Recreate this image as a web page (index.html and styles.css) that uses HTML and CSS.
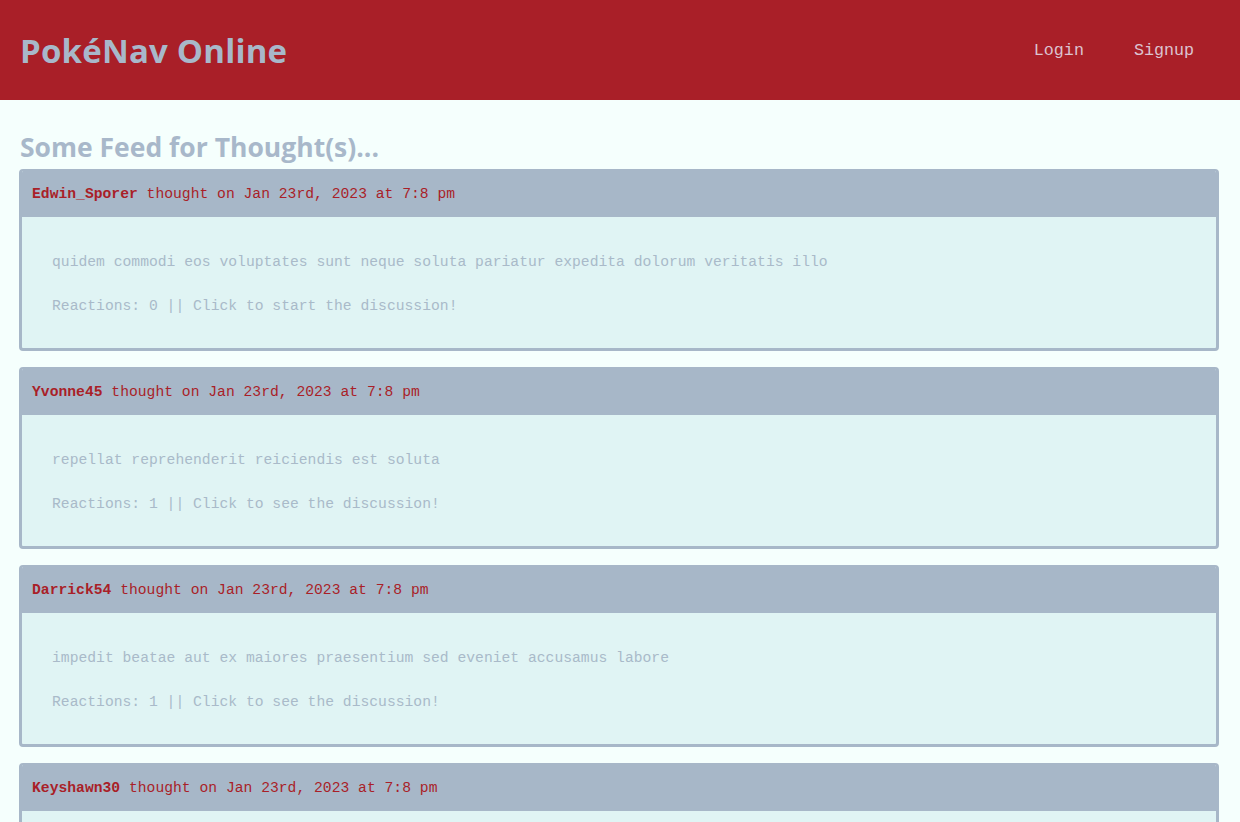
FILE: index.html
```html
<!DOCTYPE html>
<html lang="en">
<head>
<meta charset="utf-8">
<title>PokéNav Online</title>
<link rel="stylesheet" href="styles.css">
</head>
<body>
<header class="site-header">
  <h1 class="brand">PokéNav Online</h1>
  <nav class="nav">
    <a href="#" class="nav-link">Login</a>
    <a href="#" class="nav-link">Signup</a>
  </nav>
</header>
<main class="main">
  <h2 class="feed-title">Some Feed for Thought(s)...</h2>
  <div class="feed">
    <article class="card">
      <div class="card-header"><span class="user">Edwin_Sporer</span> thought on Jan 23rd, 2023 at 7:8 pm</div>
      <div class="card-body">
        <p>quidem commodi eos voluptates sunt neque soluta pariatur expedita dolorum veritatis illo</p>
        <p>Reactions: 0 || Click to start the discussion!</p>
      </div>
    </article>
    <article class="card">
      <div class="card-header"><span class="user">Yvonne45</span> thought on Jan 23rd, 2023 at 7:8 pm</div>
      <div class="card-body">
        <p>repellat reprehenderit reiciendis est soluta</p>
        <p>Reactions: 1 || Click to see the discussion!</p>
      </div>
    </article>
    <article class="card">
      <div class="card-header"><span class="user">Darrick54</span> thought on Jan 23rd, 2023 at 7:8 pm</div>
      <div class="card-body">
        <p>impedit beatae aut ex maiores praesentium sed eveniet accusamus labore</p>
        <p>Reactions: 1 || Click to see the discussion!</p>
      </div>
    </article>
    <article class="card">
      <div class="card-header"><span class="user">Keyshawn30</span> thought on Jan 23rd, 2023 at 7:8 pm</div>
      <div class="card-body">
        <p>voluptatem et quia</p>
        <p>Reactions: 0 || Click to start the discussion!</p>
      </div>
    </article>
  </div>
</main>
</body>
</html>
```
FILE: styles.css
```css
html, body {
  margin: 0;
  padding: 0;
}
body {
  background: #f5fffd;
  font-family: "Liberation Mono", "DejaVu Sans Mono", monospace;
  color: #a7b7c8;
}
.site-header {
  background: #a91f28;
  height: 100px;
  display: flex;
  align-items: center;
  justify-content: space-between;
  padding: 0 46px 0 20px;
  box-sizing: border-box;
}
.brand {
  margin: 0;
  font-family: "Open Sans", "Liberation Sans", sans-serif;
  font-weight: 700;
  font-size: 33px;
  letter-spacing: 0.2px;
  color: #a8b8ca;
}
.nav {
  display: flex;
  gap: 50px;
}
.nav-link {
  font-family: "Liberation Mono", monospace;
  font-size: 16.7px;
  color: #dcc3d0;
  text-decoration: none;
}
.main {
  padding: 30px 21px 20px 19px;
}
.feed-title {
  margin: 0 0 5px 1px;
  font-family: "Open Sans", "Liberation Sans", sans-serif;
  font-weight: 700;
  font-size: 26.5px;
  color: #a8b8ca;
  line-height: 34px;
}
.feed {
  display: flex;
  flex-direction: column;
  gap: 16.5px;
}
.card {
  border: 3px solid #a7b7c8;
  border-top-width: 2px;
  border-radius: 4px;
  background: #e0f4f4;
  overflow: hidden;
}
.card-header {
  background: #a7b7c8;
  color: #a91f28;
  font-size: 14.7px;
  line-height: 22px;
  padding: 12px 10px;
}
.user {
  font-weight: 700;
}
.card-body {
  padding: 13px 30px 9.5px;
  font-size: 14.7px;
  color: #a9bac9;
}
.card-body p {
  margin: 20px 0;
  line-height: 24px;
}
```
